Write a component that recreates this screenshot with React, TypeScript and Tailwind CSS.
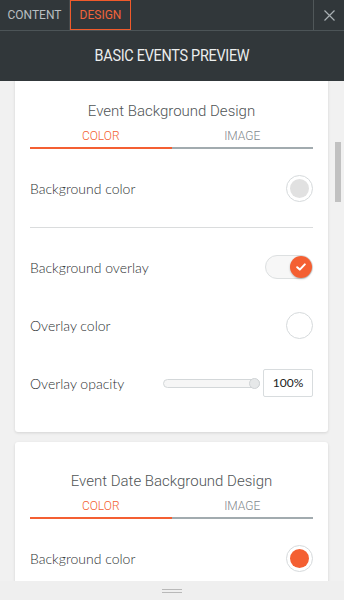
import { useState } from 'react'

const ORANGE = 'bg-[#f45f32]'

function Swatch({ fill }: { fill: string }) {
  return (
    <div className="w-[27px] h-[27px] rounded-full border border-[#d6dadc] bg-white flex items-center justify-center">
      <div className={`w-[19px] h-[19px] rounded-full ${fill}`}></div>
    </div>
  )
}

function TabSwitch() {
  return (
    <div className="mt-[5px]">
      <div className="flex h-[20px] items-center text-[12px] font-light font-['Roboto',sans-serif]">
        <div className="w-1/2 text-center text-[#f45f32]">COLOR</div>
        <div className="w-1/2 text-center text-[#7f888d]">IMAGE</div>
      </div>
      <div className="flex mt-px h-[2px]">
        <div className={`w-1/2 ${ORANGE}`}></div>
        <div className="w-1/2 bg-[#a2abaf]"></div>
      </div>
    </div>
  )
}

function Row({ label, children }: { label: string; children?: React.ReactNode }) {
  return (
    <div className="h-[58px] flex items-center justify-between">
      <span className="text-[14px] font-light text-[#2c3032] font-['Lato',sans-serif]">{label}</span>
      {children}
    </div>
  )
}

export default function App() {
  const [overlay, setOverlay] = useState(true)

  return (
    <div className="w-[344px] h-[600px] flex flex-col bg-[#f1f1f1] overflow-hidden font-['Roboto',sans-serif]">
      {/* Top tabs */}
      <div className="h-[31px] flex bg-[#31373a] border-b border-[#4c5457]">
        <div className="w-[70px] border-r border-[#434a4d] flex items-center justify-center text-[12px] text-[#b9bfc2]">
          CONTENT
        </div>
        <div className="w-[61px] border border-[#f05a2b] flex items-center justify-center text-[12px] text-[#f0643a]">
          DESIGN
        </div>
        <div className="flex-1"></div>
        <div className="w-[31px] border-l border-[#505759] flex items-center justify-center">
          <svg width="11" height="11" viewBox="0 0 11 11" className="stroke-[#a9b0b3]">
            <path d="M0.5 0.5 L10.5 10.5 M10.5 0.5 L0.5 10.5" strokeWidth="1.2" />
          </svg>
        </div>
      </div>

      {/* Header */}
      <div className="h-[50px] bg-[#31373a] flex items-center justify-center">
        <span className="text-[16px] text-[#eceeee] tracking-[-0.3px] scale-x-[0.9]">BASIC EVENTS PREVIEW</span>
      </div>

      {/* Scroll area */}
      <div className="relative flex-1 overflow-hidden pl-[15px] pr-[16px]">
        <div className="-mt-[9px] bg-white rounded-[3px] shadow-[0_1px_3px_rgba(0,0,0,0.12)] px-[15px] pt-[29px] pb-[20px]">
          <div className="h-[20px] flex items-center justify-center text-[15px] font-light text-[#4f5456]">
            Event Background Design
          </div>
          <TabSwitch />
          <div className="mt-[10px]">
            <Row label="Background color">
              <Swatch fill="bg-[#e1e1e1]" />
            </Row>
          </div>
          <div className="mt-[10px] mb-[10px] h-px bg-[#dadcdd]"></div>
          <Row label="Background overlay">
            <button
              onClick={() => setOverlay(!overlay)}
              className="w-[48px] h-[24px] rounded-full bg-[#f7f7f7] border border-[#dde0e1] relative"
            >
              <span className={`absolute top-[0px] right-[0px] w-[22px] h-[22px] rounded-full ${ORANGE} shadow-[0_1px_2px_rgba(0,0,0,0.25)] flex items-center justify-center`}>
                <svg width="10" height="8" viewBox="0 0 10 8">
                  <path d="M1.2 4.2 L3.8 6.6 L8.8 1.4" fill="none" stroke="white" strokeWidth="2" strokeLinecap="round" strokeLinejoin="round" />
                </svg>
              </span>
            </button>
          </Row>
          <Row label="Overlay color">
            <Swatch fill="bg-white" />
          </Row>
          <Row label="Overlay opacity">
            <div className="flex items-center">
              <div className="relative w-[97px] h-[9px] rounded-full bg-[#f6f6f6] border border-[#d3d7d9]">
                <span className="absolute -top-[2px] right-[-1px] w-[11px] h-[11px] rounded-full bg-[#e6e8e9] border border-[#cfd3d5]"></span>
              </div>
              <div className="ml-[3px] w-[50px] h-[28px] border border-[#d8dcde] rounded-[2px] flex items-center justify-center text-[12px] text-[#222] font-['Lato',sans-serif]">
                100%
              </div>
            </div>
          </Row>
        </div>

        <div className="mt-[10px] bg-white rounded-[3px] shadow-[0_1px_3px_rgba(0,0,0,0.12)] px-[15px] pt-[29px] pb-[20px]">
          <div className="h-[20px] flex items-center justify-center text-[15px] font-light text-[#4f5456]">
            Event Date Background Design
          </div>
          <TabSwitch />
          <div className="mt-[10px]">
            <Row label="Background color">
              <Swatch fill={ORANGE} />
            </Row>
          </div>
        </div>

        {/* scrollbar */}
        <div className="absolute right-[3px] top-[61px] w-[6px] h-[60px] bg-[#c1c1c1]"></div>
      </div>

      {/* Bottom handle */}
      <div className="h-[19px] bg-[#efefef] flex flex-col items-center justify-center gap-[2px] z-10">
        <div className="w-[20px] h-px bg-[#b9b9b9]"></div>
        <div className="w-[20px] h-px bg-[#b9b9b9]"></div>
      </div>
    </div>
  )
}
